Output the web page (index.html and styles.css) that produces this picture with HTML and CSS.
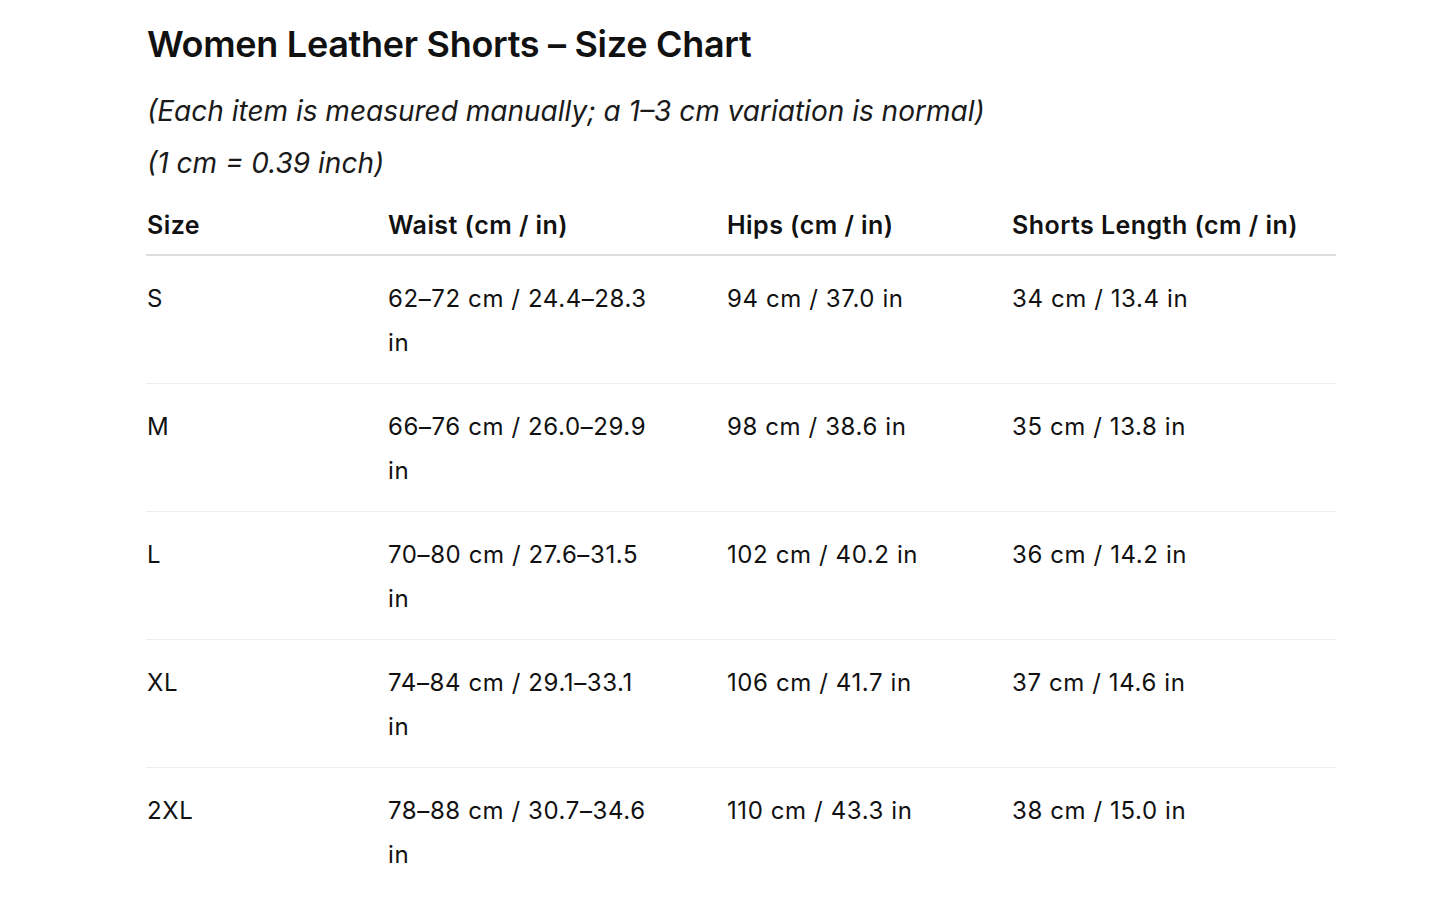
FILE: index.html
```html
<!DOCTYPE html>
<html lang="en">
<head>
<meta charset="utf-8">
<title>Women Leather Shorts – Size Chart</title>
<link rel="stylesheet" href="styles.css">
</head>
<body>
<main class="page">
  <h1 class="title">Women Leather Shorts – Size Chart</h1>
  <p class="note">(Each item is measured manually; a 1–3 cm variation is normal)</p>
  <p class="note">(1 cm = 0.39 inch)</p>
  <table class="chart">
    <colgroup>
      <col class="c-size">
      <col class="c-waist">
      <col class="c-hips">
      <col class="c-len">
    </colgroup>
    <thead>
      <tr><th>Size</th><th>Waist (cm / in)</th><th>Hips (cm / in)</th><th>Shorts Length (cm / in)</th></tr>
    </thead>
    <tbody>
      <tr><td>S</td><td>62–72 cm / 24.4–28.3 in</td><td>94 cm / 37.0 in</td><td>34 cm / 13.4 in</td></tr>
      <tr><td>M</td><td>66–76 cm / 26.0–29.9 in</td><td>98 cm / 38.6 in</td><td>35 cm / 13.8 in</td></tr>
      <tr><td>L</td><td>70–80 cm / 27.6–31.5 in</td><td>102 cm / 40.2 in</td><td>36 cm / 14.2 in</td></tr>
      <tr><td>XL</td><td>74–84 cm / 29.1–33.1 in</td><td>106 cm / 41.7 in</td><td>37 cm / 14.6 in</td></tr>
      <tr><td>2XL</td><td>78–88 cm / 30.7–34.6 in</td><td>110 cm / 43.3 in</td><td>38 cm / 15.0 in</td></tr>
    </tbody>
  </table>
</main>
</body>
</html>
```
FILE: styles.css
```css
html, body {
  margin: 0;
  padding: 0;
  background: #ffffff;
}
body {
  font-family: Inter, "Noto Sans", "Liberation Sans", sans-serif;
  color: #111111;
}
.page {
  width: 1190px;
  margin: 0 0 0 146px;
  padding-top: 20px;
}
.title {
  margin: 0 0 17px 1px;
  font-size: 36px;
  font-weight: 600;
  line-height: 48px;
  letter-spacing: -0.3px;
}
.note {
  margin: 0 0 0 1px;
  font-size: 28px;
  font-style: italic;
  line-height: 52px;
  color: #1a1a1a;
}
.chart {
  width: 1190px;
  margin-top: 10px;
  border-collapse: collapse;
  table-layout: fixed;
  font-size: 24px;
}
.c-size { width: 241px; }
.c-waist { width: 339px; }
.c-hips { width: 285px; }
.c-len { width: 325px; }
.chart th {
  text-align: left;
  font-weight: 600;
  font-size: 25px;
  letter-spacing: 0.45px;
  padding: 12px 20px 15px 1px;
  line-height: 28px;
  border-bottom: 2px solid #dddddd;
}
.chart td {
  padding: 21px 72px 18px 1px;
  line-height: 44px;
  letter-spacing: 0.6px;
  vertical-align: top;
  border-bottom: 1px solid #eeeeee;
}
.chart tbody tr:last-child td {
  border-bottom: none;
}
```
